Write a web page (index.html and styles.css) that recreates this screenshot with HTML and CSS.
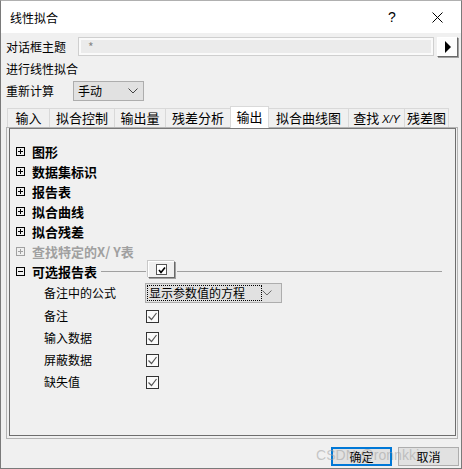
FILE: index.html
```html
<!DOCTYPE html>
<html lang="zh">
<head>
    <meta charset="UTF-8">
    <title>线性拟合</title>
    <link rel="stylesheet" href="styles.css">
</head>
<body>

    <div class="window">
        <div class="titlebar">
            <span class="title">线性拟合</span>
            <span class="help">?</span>
            <span class="close">
                <svg width="11" height="11" viewBox="0 0 11 11"><path d="M0.5 0.5 L10.5 10.5 M10.5 0.5 L0.5 10.5" stroke="#000" stroke-width="1" fill="none"/></svg>
            </span>
        </div>

        <div class="content">
            <!-- 对话框主题 -->
            <div class="row theme-row">
                <span class="label">对话框主题</span>
                <div class="textbox">*</div>
                <div class="arrow-btn">
                    <svg width="8" height="12" viewBox="0 0 8 12"><path d="M1 0 L7 6 L1 12 Z" fill="#000"/></svg>
                </div>
            </div>

            <div class="row desc">进行线性拟合</div>

            <div class="row recalc-row">
                <span class="label">重新计算</span>
                <div class="select select-small">
                    <span>手动</span>
                    <svg class="chev" width="10" height="6" viewBox="0 0 10 6"><path d="M0.5 0.5 L5 5 L9.5 0.5" stroke="#444" fill="none"/></svg>
                </div>
            </div>

            <!-- 选项卡 -->
            <div class="tabs">
                <div class="tab" style="width:42px">输入</div>
                <div class="tab" style="width:65px">拟合控制</div>
                <div class="tab" style="width:51px">输出量</div>
                <div class="tab" style="width:65px">残差分析</div>
                <div class="tab active" style="width:39px">输出</div>
                <div class="tab" style="width:79px">拟合曲线图</div>
                <div class="tab" style="width:56px">查找 <span class="xy">X/Y</span></div>
                <div class="tab" style="width:45px">残差图</div>
            </div>

            <div class="panel">
                <div class="panel-inner">
                    <ul class="tree">
                        <li class="node"><span class="pm plus"></span>图形</li>
                        <li class="node"><span class="pm plus"></span>数据集标识</li>
                        <li class="node"><span class="pm plus"></span>报告表</li>
                        <li class="node"><span class="pm plus"></span>拟合曲线</li>
                        <li class="node"><span class="pm plus"></span>拟合残差</li>
                        <li class="node disabled"><span class="pm plus"></span>查找特定的X/ Y表</li>
                        <li class="node open">
                            <span class="pm minus"></span>可选报告表
                            <span class="rule rule-short"></span>
                            <span class="mini-btn"><span class="mini-check">
                                <svg width="8" height="8" viewBox="0 0 8 8"><path d="M1 4 L3 6.5 L7 1.5" stroke="#000" stroke-width="1.6" fill="none"/></svg>
                            </span></span>
                            <span class="rule rule-long"></span>
                        </li>
                    </ul>

                    <div class="options">
                        <div class="opt opt-formula">
                            <span class="opt-label">备注中的公式</span>
                            <div class="select select-wide">
                                <span class="focus-text">显示参数值的方程</span>
                                <svg class="chev" width="10" height="6" viewBox="0 0 10 6"><path d="M0.5 0.5 L5 5 L9.5 0.5" stroke="#666" fill="none"/></svg>
                            </div>
                        </div>
                        <div class="opt opt-check">
                            <span class="opt-label">备注</span>
                            <span class="checkbox"><svg width="11" height="11" viewBox="0 0 11 11"><path d="M1.5 5.5 L4.5 8.5 L9.5 2" stroke="#555" stroke-width="1.2" fill="none"/></svg></span>
                        </div>
                        <div class="opt opt-check">
                            <span class="opt-label">输入数据</span>
                            <span class="checkbox"><svg width="11" height="11" viewBox="0 0 11 11"><path d="M1.5 5.5 L4.5 8.5 L9.5 2" stroke="#555" stroke-width="1.2" fill="none"/></svg></span>
                        </div>
                        <div class="opt opt-check">
                            <span class="opt-label">屏蔽数据</span>
                            <span class="checkbox"><svg width="11" height="11" viewBox="0 0 11 11"><path d="M1.5 5.5 L4.5 8.5 L9.5 2" stroke="#555" stroke-width="1.2" fill="none"/></svg></span>
                        </div>
                        <div class="opt opt-check">
                            <span class="opt-label">缺失值</span>
                            <span class="checkbox"><svg width="11" height="11" viewBox="0 0 11 11"><path d="M1.5 5.5 L4.5 8.5 L9.5 2" stroke="#555" stroke-width="1.2" fill="none"/></svg></span>
                        </div>
                    </div>
                </div>
            </div>

            <div class="footer">
                <button type="button" class="btn btn-default">确定</button>
                <button type="button" class="btn">取消</button>
                <span class="watermark">CSDN @ronnkki</span>
            </div>
        </div>
    </div>

</body>
</html>
```

FILE: styles.css
```css
* {margin: 0; padding: 0; box-sizing: border-box;}

body {
    width: 462px;
    height: 469px;
    background: #f0f0f0;
    font-family: "Noto Sans CJK SC", "Liberation Sans", sans-serif;
    font-size: 12px;
    color: #000;
    overflow: hidden;
}

.window {
    width: 462px;
    height: 469px;
    border: 1px solid #7a7a7a;
    border-top-color: #b0b0b0;
    background: #f0f0f0;
}

/* 标题栏 */
.titlebar {
    height: 32px;
    background: #fff;
    display: flex;
    align-items: center;
}

.titlebar .title {
    padding-left: 9px;
    font-size: 12px;
    flex: 1;
}

.titlebar .help {
    width: 46px;
    text-align: center;
    font-family: "Liberation Sans", sans-serif;
    font-size: 14px;
}

.titlebar .close {
    width: 46px;
    height: 32px;
    display: flex;
    align-items: center;
    justify-content: center;
    padding-right: 1px;
}

.content {
    padding: 0 3px 0 5px;
    position: relative;
}

.row {
    display: flex;
    align-items: center;
    height: 20px;
    margin-top: 2px;
    line-height: 20px;
}

.theme-row {margin-top: 4px;}

.theme-row .label {width: 72px;}

.textbox {
    width: 356px;
    height: 19px;
    align-self: flex-start;
    background: #ebebeb;
    border: 1px solid #cfcfcf;
    box-shadow: inset 0 0 0 2px #fafafa;
    color: #888;
    font-size: 12px;
    line-height: 17px;
    padding-left: 9px;
}

.arrow-btn {
    width: 21px;
    height: 20px;
    margin-left: 3px;
    background: #fdfdfd;
    border: 1px solid #fff;
    border-right-color: #696969;
    border-bottom-color: #696969;
    box-shadow: 1px 1px 0 #a0a0a0;
    display: flex;
    align-items: center;
    justify-content: center;
}

.recalc-row .label {width: 67px;}

.select {
    height: 20px;
    background: #e1e1e1;
    border: 1px solid #adadad;
    display: flex;
    align-items: center;
    justify-content: space-between;
    line-height: 16px;
}

.select-small {
    width: 71px;
    padding: 0 5px 0 4px;
}

/* 选项卡 */
.tabs {
    display: flex;
    align-items: flex-end;
    height: 21px;
    margin-top: 5px;
    padding-left: 1px;
}

.tab {
    height: 19px;
    border: 1px solid #d9d9d9;
    border-bottom: none;
    border-right: none;
    background: #f0f0f0;
    text-align: center;
    font-size: 13px;
    line-height: 17px;
    white-space: nowrap;
}

.tab:last-child {border-right: 1px solid #d9d9d9;}

.tab.active {
    height: 22px;
    margin-bottom: -1px;
    background: #fff;
    border: 1px solid #d9d9d9;
    border-bottom: none;
    position: relative;
    z-index: 1;
    line-height: 20px;
}

.tab.active + .tab {border-left: none;}

.xy {
    font-family: "Liberation Sans", sans-serif;
    font-size: 11px;
    font-style: italic;
}

/* 面板 */
.panel {
    height: 312px;
    border: 1px solid #b4b4b4;
    padding: 0 1px 2px 2px;
}

.panel-inner {
    height: 100%;
    border: 1px solid #6d6d6d;
    border-top-color: #7a7a7a;
}

.tree {
    list-style: none;
    padding: 12px 0 0 6px;
}

.node {
    height: 20px;
    display: flex;
    align-items: center;
    font-size: 13px;
    font-weight: bold;
    white-space: nowrap;
}

.node.disabled {color: #a0a0a0;}

.pm {
    width: 9px;
    height: 9px;
    border: 1px solid #000;
    margin-right: 7px;
    position: relative;
    flex: none;
}

.node.disabled .pm {border-color: #a0a0a0;}

.pm::before {
    content: "";
    position: absolute;
    left: 1px;
    top: 3px;
    width: 5px;
    height: 1px;
    background: #000;
}

.pm.plus::after {
    content: "";
    position: absolute;
    left: 3px;
    top: 1px;
    width: 1px;
    height: 5px;
    background: #000;
}

.node.disabled .pm::before,
.node.disabled .pm::after {background: #a0a0a0;}

.rule {
    height: 1px;
    background: #a0a0a0;
    flex: none;
}

.rule-short {width: 45px; margin-left: 4px;}
.rule-long {width: 265px; margin-left: 2px;}

.mini-btn {
    width: 27px;
    height: 17px;
    margin-left: 2px;
    margin-top: -3px;
    background: #f0f0f0;
    border: 1px solid #fff;
    border-right-color: #696969;
    border-bottom-color: #696969;
    box-shadow: 1px 1px 0 #a0a0a0, -1px -1px 0 #c8c8c8;
    display: flex;
    align-items: center;
    justify-content: center;
    flex: none;
}

.mini-check {
    width: 11px;
    height: 11px;
    background: #fff;
    border: 1px solid #555;
    display: flex;
    align-items: center;
    justify-content: center;
}

.options {padding-left: 34px;}

.opt {
    display: flex;
    align-items: center;
    height: 22px;
}

.opt-formula {
    margin-top: 2px;
    align-items: flex-start;
}

.opt-label {width: 101px; line-height: 20px;}

.select-wide {
    width: 137px;
    padding: 0 9px 0 1px;
}

.focus-text {
    border: 1px dotted #000;
    width: 116px;
    height: 16px;
    line-height: 14px;
    padding-left: 1px;
}

.checkbox {
    width: 13px;
    height: 13px;
    margin-left: 1px;
    border: 1px solid #333;
    background: #fafafa;
    display: flex;
    align-items: center;
    justify-content: center;
}

/* 底部按钮 */
.footer {
    display: flex;
    justify-content: flex-end;
    margin-top: 8px;
    margin-right: -1px;
    position: relative;
}

.btn {
    width: 61px;
    height: 19px;
    background: #e1e1e1;
    border: 1px solid #adadad;
    font-family: "Noto Sans CJK SC", sans-serif;
    font-size: 12px;
    line-height: 15px;
    color: #000;
    margin-left: 6px;
}

.btn-default {border: 2px solid #0078d7;}

.watermark {
    position: absolute;
    right: 40px;
    top: 0;
    font-family: "Liberation Sans", sans-serif;
    font-size: 14px;
    color: rgba(160, 160, 160, 0.55);
    pointer-events: none;
}
```
